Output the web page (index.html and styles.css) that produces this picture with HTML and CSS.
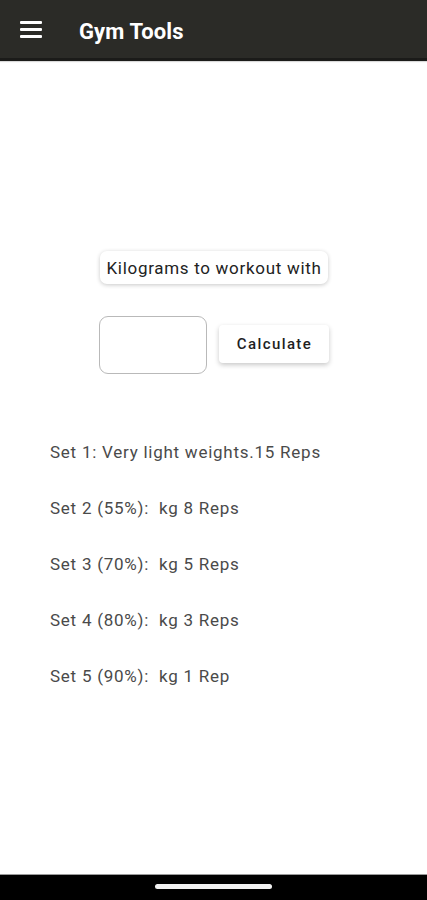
FILE: index.html
```html
<!DOCTYPE html>
<html>
<head>
<meta charset="utf-8">
<link rel="stylesheet" href="styles.css">
</head>
<body>
<div class="app">
  <header class="topbar">
    <span class="menu" aria-label="menu">
      <svg width="22" height="17" viewBox="0 0 22 17"><rect x="0" y="0" width="22" height="3" rx="1" fill="#fff"/><rect x="0" y="7" width="22" height="3" rx="1" fill="#fff"/><rect x="0" y="14" width="22" height="3" rx="1" fill="#fff"/></svg>
    </span>
    <h1 class="title">Gym Tools</h1>
  </header>
  <main class="content">
    <div class="label-card">Kilograms to workout with</div>
    <div class="input-row">
      <div class="field"></div>
      <button class="calc">Calculate</button>
    </div>
    <ul class="sets">
      <li>Set 1: Very light weights.15 Reps</li>
      <li>Set 2 (55%):&nbsp; kg 8 Reps</li>
      <li>Set 3 (70%):&nbsp; kg 5 Reps</li>
      <li>Set 4 (80%):&nbsp; kg 3 Reps</li>
      <li>Set 5 (90%):&nbsp; kg 1 Rep</li>
    </ul>
  </main>
  <footer class="navbar"><span class="pill"></span></footer>
</div>
</body>
</html>
```
FILE: styles.css
```css
* { box-sizing: border-box; }
html, body { margin: 0; padding: 0; }
body {
  font-family: Roboto, "Noto Sans", sans-serif;
  background: #fff;
  width: 427px;
  height: 900px;
  overflow: hidden;
}
.app {
  display: flex;
  flex-direction: column;
  height: 900px;
}
.topbar {
  height: 61px;
  background: #2b2b27;
  border-bottom: 3px solid #1b1b19;
  box-shadow: 0 1px 1px rgba(0,0,0,0.15);
  display: flex;
  align-items: center;
  padding-left: 20px;
  padding-top: 2px;
}
.menu { display: flex; width: 22px; height: 17px; margin-top: -2px; }
.title {
  margin: 3px 0 0 37px;
  color: #fff;
  font-size: 22px;
  font-weight: 700;
  letter-spacing: 0.1px;
}
.content {
  flex: 1;
  display: flex;
  flex-direction: column;
  align-items: center;
  padding-top: 190px;
}
.label-card {
  width: 228px;
  height: 33px;
  border-radius: 7px;
  background: #fff;
  box-shadow: 0 1px 4px rgba(0,0,0,0.22);
  display: flex;
  align-items: center;
  justify-content: center;
  font-size: 17px;
  letter-spacing: 0.7px;
  color: #222;
  margin-left: 1px;
  white-space: nowrap;
}
.input-row {
  margin-top: 32px;
  display: flex;
  align-items: center;
  gap: 12px;
  margin-left: 1px;
}
.field {
  width: 108px;
  height: 58px;
  border: 1px solid #b9b9b9;
  border-radius: 9px;
}
.calc {
  width: 110px;
  height: 38px;
  border: none;
  border-radius: 4px;
  background: #fff;
  box-shadow: 0 2px 5px rgba(0,0,0,0.22);
  font-family: Roboto, "Noto Sans", sans-serif;
  font-size: 15px;
  font-weight: 500;
  letter-spacing: 1.4px;
  color: #1f1f1f;
  padding: 0 0 0 1px;
  margin-top: -2px;
}
.sets {
  list-style: none;
  margin: 68px 0 0;
  padding: 0 0 0 50px;
  align-self: stretch;
  display: flex;
  flex-direction: column;
  gap: 36px;
}
.sets li {
  font-size: 17px;
  line-height: 20px;
  color: #4a4a4a;
  letter-spacing: 0.75px;
  white-space: nowrap;
}
.navbar {
  height: 26px;
  background: #000;
  border-top: 1px solid #9a9a9a;
  display: flex;
  justify-content: center;
  padding-top: 9px;
}
.pill {
  width: 117px;
  height: 5px;
  border-radius: 3px;
  background: #f2f2f2;
}
```
